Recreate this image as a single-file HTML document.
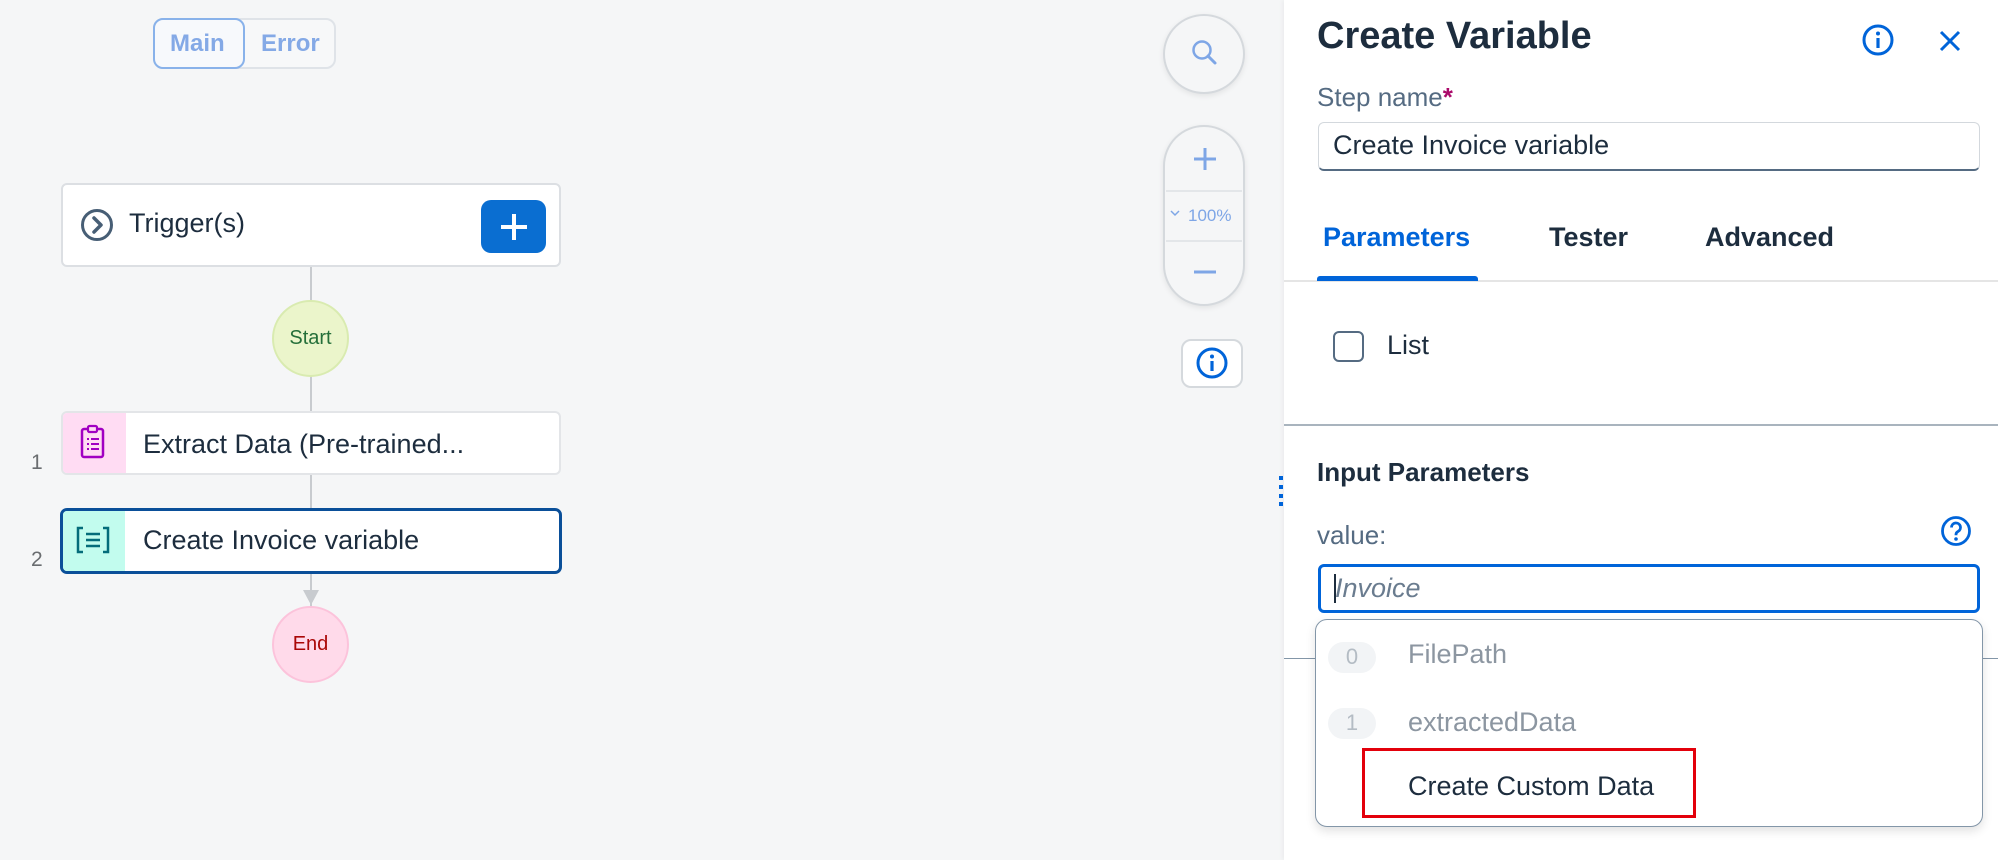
<!DOCTYPE html>
<html><head><meta charset="utf-8"><style>
*{box-sizing:border-box;margin:0;padding:0}
body{width:1998px;height:860px;overflow:hidden;background:#f5f6f7;font-family:"Liberation Sans",sans-serif;position:relative;color:#1d2d3e}
.a{position:absolute}
.t{position:absolute;white-space:nowrap;line-height:1}
</style></head><body>
<!-- toggle -->
<div class="a" style="left:153px;top:18px;width:183px;height:51px;border:2px solid #dfe3e8;border-radius:10px;background:#f7f8f9"></div>
<div class="a" style="left:153px;top:18px;width:92px;height:51px;border:2px solid #89b2ea;border-radius:10px;background:#f7f9fc"></div>
<div class="t" style="left:170px;top:32px;font-size:24px;font-weight:bold;color:#84a9e6">Main</div>
<div class="t" style="left:261px;top:32px;font-size:24px;font-weight:bold;color:#84a9e6">Error</div>

<!-- lines -->
<div class="a" style="left:310px;top:267px;width:2px;height:340px;background:#c8cbcf"></div>
<svg class="a" style="left:302px;top:588px" width="18" height="18"><path d="M1 2 L17 2 L9 17 Z" fill="#c8cbcf"/></svg>

<!-- trigger -->
<div class="a" style="left:61px;top:183px;width:500px;height:84px;background:#fff;border:2px solid #dcdfe3;border-radius:6px"></div>
<svg class="a" style="left:80px;top:208px" width="34" height="34"><circle cx="17" cy="17" r="14.5" fill="none" stroke="#475e75" stroke-width="3"/><path d="M14 10 L21 17 L14 24" fill="none" stroke="#475e75" stroke-width="3.5" stroke-linecap="round" stroke-linejoin="round"/></svg>
<div class="t" style="left:129px;top:210px;font-size:27px">Trigger(s)</div>
<div class="a" style="left:481px;top:200px;width:65px;height:53px;background:#0a6ed1;border-radius:10px"></div>
<svg class="a" style="left:498px;top:211px" width="32" height="32"><path d="M16 3V29M3 16H29" stroke="#fff" stroke-width="4"/></svg>

<!-- start -->
<div class="a" style="left:272px;top:300px;width:77px;height:77px;border-radius:50%;background:#ebf5cb;border:2px solid #d9ebb0"></div>
<div class="t" style="left:272px;top:328px;width:77px;text-align:center;font-size:20px;color:#256f3a">Start</div>

<!-- extract -->
<div class="a" style="left:61px;top:411px;width:500px;height:64px;background:#fff;border:2px solid #e3e5e8;border-radius:6px;overflow:hidden"><div style="width:63px;height:100%;background:#ffdcf3"></div></div>
<svg class="a" style="left:78px;top:424px" width="30" height="36"><rect x="4" y="5" width="21" height="28" rx="2" fill="none" stroke="#a100c2" stroke-width="2.5"/><rect x="10" y="2" width="9" height="6" rx="1.5" fill="#ffdcf3" stroke="#a100c2" stroke-width="2.2"/><path d="M9 15h2M13 15h8M9 20h2M13 20h8M9 25h2M13 25h8" stroke="#a100c2" stroke-width="2"/></svg>
<div class="t" style="left:143px;top:431px;font-size:27px">Extract Data (Pre-trained...</div>
<div class="t" style="left:31px;top:452px;font-size:21px;color:#6a6d70">1</div>

<!-- create -->
<div class="a" style="left:60px;top:508px;width:502px;height:66px;background:#fff;border:3px solid #0a4f99;border-radius:7px;overflow:hidden"><div style="width:62px;height:100%;background:#c2fcee"></div></div>
<svg class="a" style="left:76px;top:525px" width="34" height="30"><path d="M7 3H2V27H7M27 3H32V27H27" fill="none" stroke="#046c7a" stroke-width="2.5"/><path d="M10 9H24M10 15H24M10 21H24" stroke="#046c7a" stroke-width="2.5"/></svg>
<div class="t" style="left:143px;top:527px;font-size:27px">Create Invoice variable</div>
<div class="t" style="left:31px;top:549px;font-size:21px;color:#6a6d70">2</div>

<!-- end -->
<div class="a" style="left:272px;top:606px;width:77px;height:77px;border-radius:50%;background:#ffdaea;border:2px solid #fcc3db"></div>
<div class="t" style="left:272px;top:634px;width:77px;text-align:center;font-size:20px;color:#aa0808">End</div>

<!-- zoom controls -->
<div class="a" style="left:1163px;top:14px;width:82px;height:80px;border-radius:50%;background:#f5f6f7;border:2px solid #d5d9dd;box-shadow:0 2px 6px rgba(0,0,0,.08)"></div>
<svg class="a" style="left:1190px;top:38px" width="30" height="30"><circle cx="12" cy="12" r="8.5" fill="none" stroke="#7ea6e6" stroke-width="2.5"/><path d="M18 18L25 25" stroke="#7ea6e6" stroke-width="3" stroke-linecap="round"/></svg>
<div class="a" style="left:1163px;top:125px;width:82px;height:181px;border-radius:41px;background:#f5f6f7;border:2px solid #d5d9dd;box-shadow:0 2px 6px rgba(0,0,0,.08)"></div>
<div class="a" style="left:1166px;top:190px;width:76px;height:2px;background:#e3e6e9"></div>
<div class="a" style="left:1166px;top:240px;width:76px;height:2px;background:#e3e6e9"></div>
<svg class="a" style="left:1192px;top:146px" width="26" height="26"><path d="M13 2V24M2 13H24" stroke="#7ea6e6" stroke-width="3"/></svg>
<svg class="a" style="left:1192px;top:259px" width="26" height="26"><path d="M2 13H24" stroke="#7ea6e6" stroke-width="3"/></svg>
<svg class="a" style="left:1169px;top:208px" width="12" height="10"><path d="M2 3L6 7L10 3" fill="none" stroke="#7ea6e6" stroke-width="1.5"/></svg>
<div class="t" style="left:1188px;top:207px;font-size:17px;color:#7ea6e6">100%</div>
<div class="a" style="left:1181px;top:339px;width:62px;height:49px;border-radius:10px;background:#fff;border:2px solid #d5d9dd"></div>
<svg class="a" style="left:1195px;top:346px" width="34" height="34"><circle cx="17" cy="17" r="14" fill="none" stroke="#0064d9" stroke-width="3"/><circle cx="17" cy="10.5" r="2" fill="#0064d9"/><path d="M17 15V25" stroke="#0064d9" stroke-width="3.2"/></svg>

<!-- panel -->
<div class="a" style="left:1284px;top:0;width:714px;height:860px;background:#fff;box-shadow:-2px 0 4px rgba(0,0,0,.04)"></div>
<div class="t" style="left:1317px;top:17px;font-size:38px;font-weight:bold">Create Variable</div>
<svg class="a" style="left:1861px;top:23px" width="34" height="34"><circle cx="17" cy="17" r="14" fill="none" stroke="#0064d9" stroke-width="3"/><circle cx="17" cy="10.5" r="2" fill="#0064d9"/><path d="M17 15V25" stroke="#0064d9" stroke-width="3.2"/></svg>
<svg class="a" style="left:1938px;top:29px" width="24" height="24"><path d="M3 3L21 21M21 3L3 21" stroke="#0064d9" stroke-width="3"/></svg>
<div class="t" style="left:1317px;top:84px;font-size:26px;color:#556b82">Step name<span style="color:#aa0a6a;font-weight:bold">*</span></div>
<div class="a" style="left:1318px;top:122px;width:662px;height:49px;border:1px solid #d3d8dd;border-bottom:2px solid #556b82;border-radius:6px"></div>
<div class="t" style="left:1333px;top:132px;font-size:27px">Create Invoice variable</div>

<div class="t" style="left:1323px;top:224px;font-size:27px;font-weight:bold;color:#0064d9">Parameters</div>
<div class="t" style="left:1549px;top:224px;font-size:27px;font-weight:bold">Tester</div>
<div class="t" style="left:1705px;top:224px;font-size:27px;font-weight:bold">Advanced</div>
<div class="a" style="left:1284px;top:280px;width:714px;height:2px;background:#e5e5e5"></div>
<div class="a" style="left:1317px;top:276px;width:161px;height:5px;background:#0064d9;border-radius:3px 3px 0 0"></div>

<div class="a" style="left:1333px;top:331px;width:31px;height:31px;border:2px solid #556b82;border-radius:6px"></div>
<div class="t" style="left:1387px;top:332px;font-size:27px">List</div>
<div class="a" style="left:1284px;top:424px;width:714px;height:2px;background:#a9b4be"></div>

<div class="t" style="left:1317px;top:459px;font-size:26px;font-weight:bold">Input Parameters</div>
<div class="a" style="left:1279px;top:476px;width:4px;height:4px;background:#0064d9;box-shadow:0 9px 0 #0064d9,0 18px 0 #0064d9,0 26px 0 #0064d9"></div>
<div class="t" style="left:1317px;top:522px;font-size:26px;color:#556b82">value:</div>
<svg class="a" style="left:1940px;top:515px" width="32" height="32"><circle cx="16" cy="16" r="13.5" fill="none" stroke="#0064d9" stroke-width="2.8"/><path d="M11.5 12.5a4.5 4.5 0 1 1 6.5 4c-1.5 0.8-2 1.6-2 3v0.8" fill="none" stroke="#0064d9" stroke-width="2.8"/><circle cx="16" cy="24" r="1.8" fill="#0064d9"/></svg>
<div class="a" style="left:1318px;top:564px;width:662px;height:49px;border:3px solid #0064d9;border-radius:6px"></div>
<div class="a" style="left:1334px;top:574px;width:2px;height:29px;background:#1d2d3e"></div>
<div class="t" style="left:1335px;top:575px;font-size:27px;font-style:italic;color:#6a7c8f">Invoice</div>

<div class="a" style="left:1284px;top:658px;width:714px;height:1px;background:#8396a8"></div>
<div class="a" style="left:1315px;top:619px;width:668px;height:208px;background:#fff;border:1px solid #8396a8;border-radius:12px;box-shadow:0 4px 10px rgba(0,0,0,.12)"></div>
<div class="a" style="left:1328px;top:642px;width:48px;height:31px;border-radius:16px;background:#f2f4f6"></div>
<div class="t" style="left:1328px;top:646px;width:48px;text-align:center;font-size:22px;color:#b4bcc4">0</div>
<div class="t" style="left:1408px;top:641px;font-size:27px;color:#8c96a1">FilePath</div>
<div class="a" style="left:1328px;top:708px;width:48px;height:31px;border-radius:16px;background:#f2f4f6"></div>
<div class="t" style="left:1328px;top:712px;width:48px;text-align:center;font-size:22px;color:#b4bcc4">1</div>
<div class="t" style="left:1408px;top:709px;font-size:27px;color:#8c96a1">extractedData</div>
<div class="t" style="left:1408px;top:773px;font-size:27px">Create Custom Data</div>
<div class="a" style="left:1362px;top:748px;width:334px;height:70px;border:3px solid #e3000b"></div>
</body></html>
